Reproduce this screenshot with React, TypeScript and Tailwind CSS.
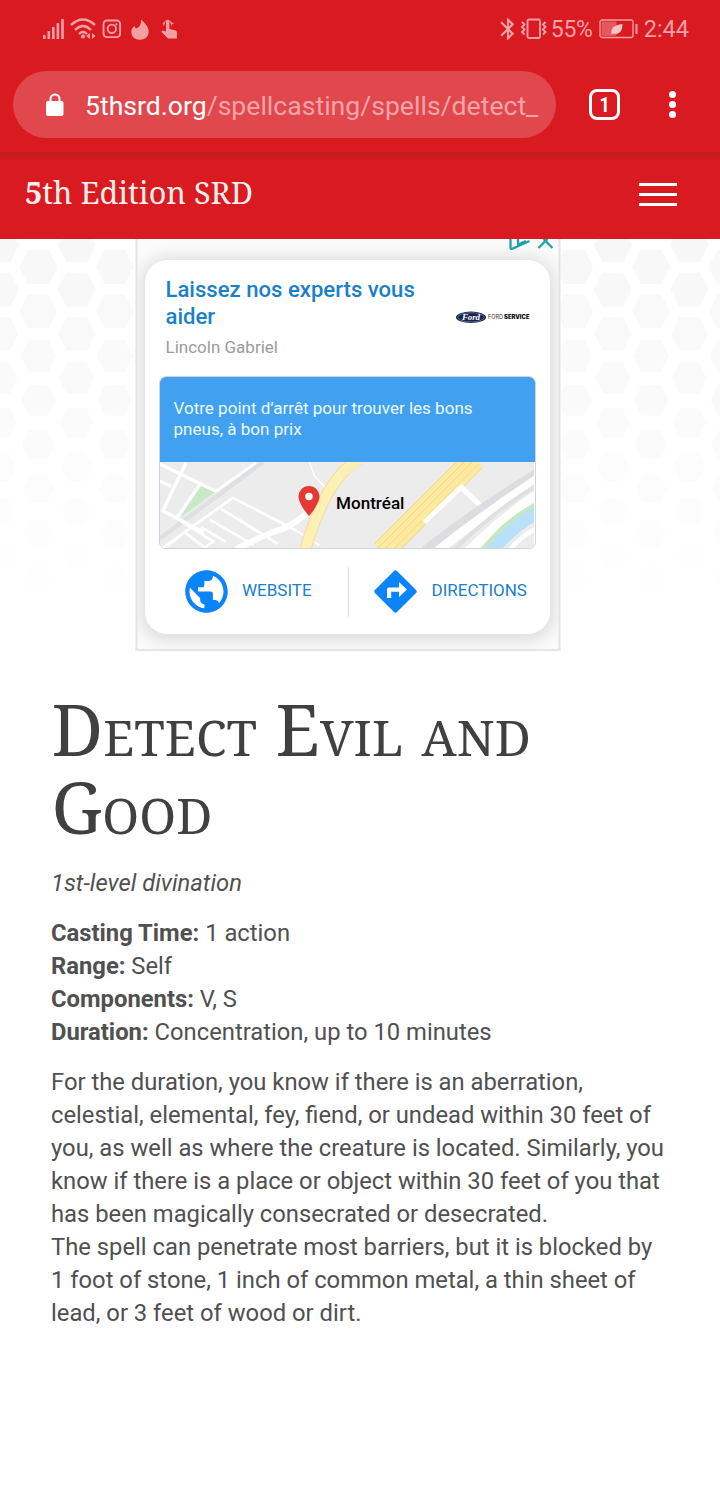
import React from "react";
import { MdBluetooth, MdLocationOn, MdPublic } from "react-icons/md";

const SERIF = "font-['Noto_Serif','Droid_Serif','DejaVu_Serif_Condensed','DejaVu_Serif',serif]";

function StatusBar() {
  return (
    <div className="flex h-[58px] items-center justify-between pl-[42px] pr-[31px] text-[#f3a0a5]">
      <div className="flex items-center">
        <svg width="23" height="22" viewBox="0 0 23 22" fill="currentColor">
          <rect x="1" y="17" width="2.6" height="4" />
          <rect x="5.5" y="13" width="2.6" height="8" />
          <rect x="10" y="9" width="2.6" height="12" />
          <rect x="14.6" y="5" width="2.6" height="16" />
          <rect x="19.2" y="1" width="2.6" height="20" />
        </svg>
        <svg className="ml-[5px]" width="26" height="22" viewBox="0 0 26 22" fill="none" stroke="currentColor" strokeWidth="2.4">
          <path d="M1 7Q13 -4 25 7M5 12Q13 4 21 12M9 16Q13 12 17 16" />
          <circle cx="13" cy="18.5" r="2" fill="currentColor" stroke="none" />
          <path d="M20 15v6l-4-3zM22 15v6l3.5-3z" fill="currentColor" stroke="none" />
        </svg>
        <svg className="ml-1.5" width="20" height="20" viewBox="0 0 20 20" fill="none" stroke="currentColor" strokeWidth="1.9">
          <rect x="1.5" y="1.5" width="16.6" height="16.6" rx="3.4" />
          <circle cx="9.8" cy="9.8" r="4.2" />
          <circle cx="14.4" cy="5.3" r="1.1" fill="currentColor" stroke="none" />
        </svg>
        <svg className="ml-[9px]" width="18" height="21" viewBox="0 0 54 63" fill="currentColor">
          <path d="M30 1C38 11 53 20 53 38C53 53 41 62 27 62C12 62 1 53 1 38C1 31 5 25 11 21C11 25 13 28 17 28C27 24 31 14 30 1z" />
        </svg>
        <svg className="ml-[12px]" width="17" height="20" viewBox="0 0 17 20" fill="currentColor">
          <path d="M5 2.500a1.700 1.700 0 0 1 3.400 0V10l5.600 1.200q2 .5 2 2.300V19.500H7L.3 12.800l1.300-1.300L5 12.500z" />
          <path d="M2.800 6.500Q2.200 1.800 6.700 1.800T10.800 6.500M2 4.300h2M9.500 4.300h3" fill="none" stroke="currentColor" strokeWidth="1" />
        </svg>
      </div>
      <div className="flex items-center font-[Roboto,sans-serif] text-[24px] leading-[24px]">
        <MdBluetooth size={26} className="-ml-[2px] mr-px" />
        <svg className="-ml-[2px]" width="28" height="22" viewBox="0 0 28 22" fill="none" stroke="currentColor" strokeWidth="1.900">
          <rect x="7.500" y="1.500" width="12.500" height="18.500" rx="1.500" />
          <path d="M2 4l2.500 2.500L2 9l2.500 2.500L2 14l2.500 2.500M25.500 4L23 6.500 25.500 9 23 11.500l2.500 2.500L23 16.500" />
        </svg>
        <span className="ml-[3px] mt-[2px] w-[42px] whitespace-nowrap text-[23px] tracking-[-0.2px]">55%</span>
        <svg className="ml-[6px]" width="41" height="20" viewBox="0 0 41 20" fill="none" stroke="currentColor">
          <rect x="1" y="1" width="33" height="17.500" rx="2" strokeWidth="1.300" />
          <rect x="2.500" y="2.500" width="15" height="14.500" fill="#e5585f" stroke="none" />
          <path d="M12.500 15.500c-1-6 2-9.500 11-10.500 0 7-3 11-9 9.500z" fill="#f9c4c6" stroke="none" />
          <path d="M37.500 5v10" strokeWidth="2" />
        </svg>
        <span className="ml-[4px] whitespace-nowrap text-[23.500px]">2:44</span>
      </div>
    </div>
  );
}

function AddressBar() {
  return (
    <div className="flex h-[94px] items-start pl-[13px] pt-[13px]">
      <div className="flex h-[67px] w-[543px] items-center rounded-full bg-[#e0484e] pl-[33px]">
        <svg width="18" height="24" viewBox="0 0 18 24">
          <path d="M4.500 10V6a4.500 4.500 0 0 1 9 0v4" fill="none" stroke="white" strokeWidth="2" />
          <rect x="0" y="8" width="17.500" height="15" rx="2" fill="white" />
        </svg>
        <div className="ml-[21px] mt-[3px] w-[455px] overflow-hidden whitespace-nowrap font-[Roboto,sans-serif] text-[26.600px] leading-[34px] text-white">
          5thsrd.org<span className="text-[#f3a3a7]">/spellcasting/spells/detect_</span>
        </div>
      </div>
      <div className="ml-[33px] mt-[18px] flex h-[31px] w-[31px] items-center justify-center rounded-[8px] border-[3px] border-white font-[Roboto,sans-serif] text-[20px] font-bold leading-none text-white">
        <span className="scale-x-90">1</span>
      </div>
      <div className="ml-[49px] mt-[20px] flex flex-col gap-[3px]">
        <i className="h-[7px] w-[7px] rounded-full bg-white" />
        <i className="h-[7px] w-[7px] rounded-full bg-white" />
        <i className="h-[7px] w-[7px] rounded-full bg-white" />
      </div>
    </div>
  );
}

function SiteHeader() {
  return (
    <header className="flex h-[87px] items-center justify-between bg-linear-to-b from-[#c11b20] to-[#d91a21] to-[9px] pl-[25px] pr-[43px]">
      <div className={`${SERIF} mb-[8px] whitespace-nowrap text-[30.600px] leading-[40px] text-[#fff0f0]`}>
        <b>5</b>th Edition SRD
      </div>
      <div className="mb-[2px] flex flex-col gap-[7px]">
        <i className="h-[3px] w-[38px] bg-white" />
        <i className="h-[3px] w-[38px] bg-white" />
        <i className="h-[3px] w-[38px] bg-white" />
      </div>
    </header>
  );
}

function Honeycomb() {
  const cells = [];
  for (let c = 0; c < 20; c++) {
    for (let r = 0; r < 9; r++) {
      const x = c * 38.3;
      const y = (c % 2 ? 28 : 6) + r * 44.4;
      const k = 1 - Math.max(0, y - 60) / 1100;
      const w = 19 * k;
      const h = 17 * k;
      cells.push(
        <path
          key={`${c}-${r}`}
          d={`M${x - w} ${y}L${x - w * 0.55} ${y - h}H${x + w * 0.55}L${x + w} ${y}L${x + w * 0.55} ${y + h}H${x - w * 0.55}Z`}
          fill="#f7f7f7"
          opacity={Math.max(0, 1 - y / 370)}
        />,
      );
    }
  }
  return (
    <svg className="absolute inset-0" width="720" height="412" viewBox="0 0 720 412">
      {cells}
    </svg>
  );
}

function MapView() {
  return (
    <svg className="block" width="374" height="86" viewBox="0.500 0 374 86">
      <rect width="376" height="86" fill="#ececec" />
      <g transform="translate(-20 -101.500) scale(.33333)" fill="none" stroke="#fff" strokeWidth="9">
        <path d="M180 372l48 22-104 76z" fill="#c9e8c8" stroke="none" />
        <path d="M60 535L370 305" stroke="#dde0e3" strokeWidth="13" />
        <path d="M230 392L350 306" strokeWidth="8" />
        <path d="M60 310l172 84M140 306L68 455M60 362l35 15M183 370L112 472M68 450l125 65" strokeWidth="10" />
        <path d="M70 562L280 412l190 98M245 445l170 105M212 478l130 75M185 500l75 45M105 470l115 72M80 560l55-45 60 45M225 540l-35 26" strokeWidth="8" />
        <path d="M470 510l70 45" strokeWidth="6" />
        <path d="M290 566Q390 515 430 505Q500 475 590 370" strokeWidth="18" />
        <path d="M510 306l15 40 45 50" strokeWidth="4" />
        <path d="M498 566Q560 350 660 296" stroke="#f3dc98" strokeWidth="36" />
        <path d="M498 566Q560 350 660 296" stroke="#fdf0b4" strokeWidth="30" />
      </g>
      <g transform="translate(190 -101.500) scale(.33333)" fill="none" stroke="#fff">
        <path d="M-25 345L35 300" stroke="#fbeeb4" strokeWidth="20" />
        <path d="M98 574L376 296" stroke="#f0d892" strokeWidth="70" />
        <path d="M98 574L376 296" stroke="#fdeba2" strokeWidth="65" />
        <path d="M84 564L355 293M98 574L370 302M114 584L388 310" stroke="#f3d68a" strokeWidth="3" />
        <path d="M225 485L335 380l65 62" strokeWidth="15" />
        <path d="M225 570Q390 440 560 340" stroke="#dcdde0" strokeWidth="26" />
        <path d="M260 575Q400 460 700 265" strokeWidth="27" />
        <path d="M300 580Q430 455 560 375" stroke="#dfe0e2" strokeWidth="12" />
        <path d="M350 580Q450 480 560 405" strokeWidth="30" />
        <path d="M395 580Q460 490 560 435" stroke="#c5e6c6" strokeWidth="20" />
        <path d="M420 582Q480 505 560 460" stroke="#b9e0fb" strokeWidth="36" />
        <path d="M475 575Q510 530 560 505" strokeWidth="14" />
      </g>
    </svg>
  );
}

function Advert() {
  return (
    <div className="relative mx-auto h-[412px] w-[425px] -translate-x-[12.500px] overflow-hidden border-2 border-t-0 border-[#e4e4e4] bg-[#fbfbfb] px-[8px] pt-[21px] font-[Roboto,sans-serif]">
      <svg className="absolute right-[5px] top-0" width="48" height="12" viewBox="0 0 48 12" fill="none" stroke="#1fa3b0" strokeWidth="2.300">
        <path d="M5 0v8.500q0 2 1.800 1.200L24 2M12.500 0v5.500l8-3.500M33 9l7-7 7 7M38 0l2 2 2-2" />
      </svg>
      <div className="flex h-[374px] w-[405px] -translate-x-[0.500px] flex-col rounded-[22px] bg-white px-[14px] shadow-[0_2px_16px_5px_rgba(0,0,0,0.12)]">
        <div className="flex h-[116px] justify-between pl-[7px] pr-[6px] pt-[16px]">
          <div>
            <div className="w-[262px] text-[22.120px] font-medium leading-[27px] text-[#1a80ca]">Laissez nos experts vous aider</div>
            <div className="mt-[7px] text-[17px] leading-[20px] text-[#9b9b9b]">Lincoln Gabriel</div>
          </div>
          <svg className="mt-[35px]" width="74" height="13" viewBox="0 0 74 13">
            <ellipse cx="15" cy="6.300" rx="15" ry="5.700" fill="#17254c" />
            <ellipse cx="15" cy="6.300" rx="13.300" ry="4.600" fill="none" stroke="#9aa5bd" strokeWidth=".5" />
            <text x="6" y="9.300" fontSize="9" fontStyle="italic" fontWeight="bold" fontFamily="Liberation Serif, serif" fill="#fff" textLength="18">Ford</text>
            <text x="32" y="8.300" fontSize="5.500" fontFamily="Inter, sans-serif" fill="#333" textLength="15" lengthAdjust="spacingAndGlyphs">FORD</text>
            <text x="48" y="8.300" fontSize="5.500" fontWeight="900" fontFamily="Inter, sans-serif" fill="#111" textLength="25.500" lengthAdjust="spacingAndGlyphs">SERVICE</text>
          </svg>
        </div>
        <div className="relative h-[173px] overflow-hidden rounded-[7px] border-[1.500px] border-[#cbd5dc]">
          <div className="h-[85px] whitespace-nowrap bg-[#42a0f1] pl-[14px] pt-[21px] text-[17.040px] leading-[21px] text-[#e9fbff]">
            Votre point d’arrêt pour trouver les bons
            <br />
            pneus, à bon prix
          </div>
          <MapView />
          <div className="absolute left-[131px] top-[106px] flex items-center">
            <svg width="36" height="36" viewBox="0 0 24 24" className="shrink-0">
              <circle cx="12" cy="9" r="3.500" fill="#fff" />
              <MdLocationOn size={24} color="#e53935" />
            </svg>
            <span className="ml-[9.500px] mt-[3px] text-[17.100px] font-medium leading-[20px] text-black">Montréal</span>
          </div>
        </div>
        <div className="flex flex-1 items-center text-[17px] text-[#1a80ca]">
          <div className="flex h-[50px] w-[190px] items-center border-r border-[#dcdcdc] pl-[22px]">
            <MdPublic size={51} color="#0a84f8" className="shrink-0" />
            <span className="-mt-[2px] ml-[10.500px]">WEBSITE</span>
          </div>
          <div className="flex items-center pl-[25px]">
            <svg width="43" height="43" viewBox="0 0 43 43" className="shrink-0">
              <path d="M20 .9q1.500-1.200 3 0L42.100 20q1.200 1.500 0 3L23 42.100q-1.500 1.200-3 0L.9 23q-1.200-1.500 0-3z" fill="#0a84f8" />
              <path d="M13 28V19.500q0-2 2-2h10V12l8 7.600-8 7.400v-5.300H17.200V28z" fill="#fff" />
            </svg>
            <span className="-mt-[2px] ml-[15px]">DIRECTIONS</span>
          </div>
        </div>
      </div>
    </div>
  );
}

function SmallCaps({ children }: { children: React.ReactNode }) {
  return <span className="text-[49.700px] uppercase leading-none">{children}</span>;
}

const FACTS = [
  ["Casting Time:", "1 action"],
  ["Range:", "Self"],
  ["Components:", "V, S"],
  ["Duration:", "Concentration, up to 10 minutes"],
];

const BODY = [
  "For the duration, you know if there is an aberration,",
  "celestial, elemental, fey, fiend, or undead within 30 feet of",
  "you, as well as where the creature is located. Similarly, you",
  "know if there is a place or object within 30 feet of you that",
  "has been magically consecrated or desecrated.",
  "The spell can penetrate most barriers, but it is blocked by",
  "1 foot of stone, 1 inch of common metal, a thin sheet of",
  "lead, or 3 feet of wood or dirt.",
];

export default function App() {
  return (
    <div className="h-[1496px] w-[720px] overflow-hidden bg-white">
      <div className="bg-[#d91a21]">
        <StatusBar />
        <AddressBar />
        <SiteHeader />
      </div>
      <div className="relative">
        <Honeycomb />
        <Advert />
      </div>
      <main className="whitespace-nowrap px-[51px] pt-[39px] font-[Roboto,sans-serif] text-[23.790px] leading-[33px] text-[#505050]">
        <h1 className={`${SERIF} pl-[0.500px] text-[71px] leading-[78px] tracking-[0.1px] text-[#404040]`}>
          D<SmallCaps>etect</SmallCaps> E<SmallCaps>vil</SmallCaps> <SmallCaps>and</SmallCaps>
          <br />
          G<SmallCaps>ood</SmallCaps>
        </h1>
        <p className="mt-[21px] italic">1st-level divination</p>
        <div className="mt-[17px]">
          {FACTS.map(([label, value]) => (
            <p key={label}>
              <b>{label}</b> {value}
            </p>
          ))}
        </div>
        <div className="mt-[17px]">
          {BODY.map((line) => (
            <p key={line}>{line}</p>
          ))}
        </div>
      </main>
    </div>
  );
}
